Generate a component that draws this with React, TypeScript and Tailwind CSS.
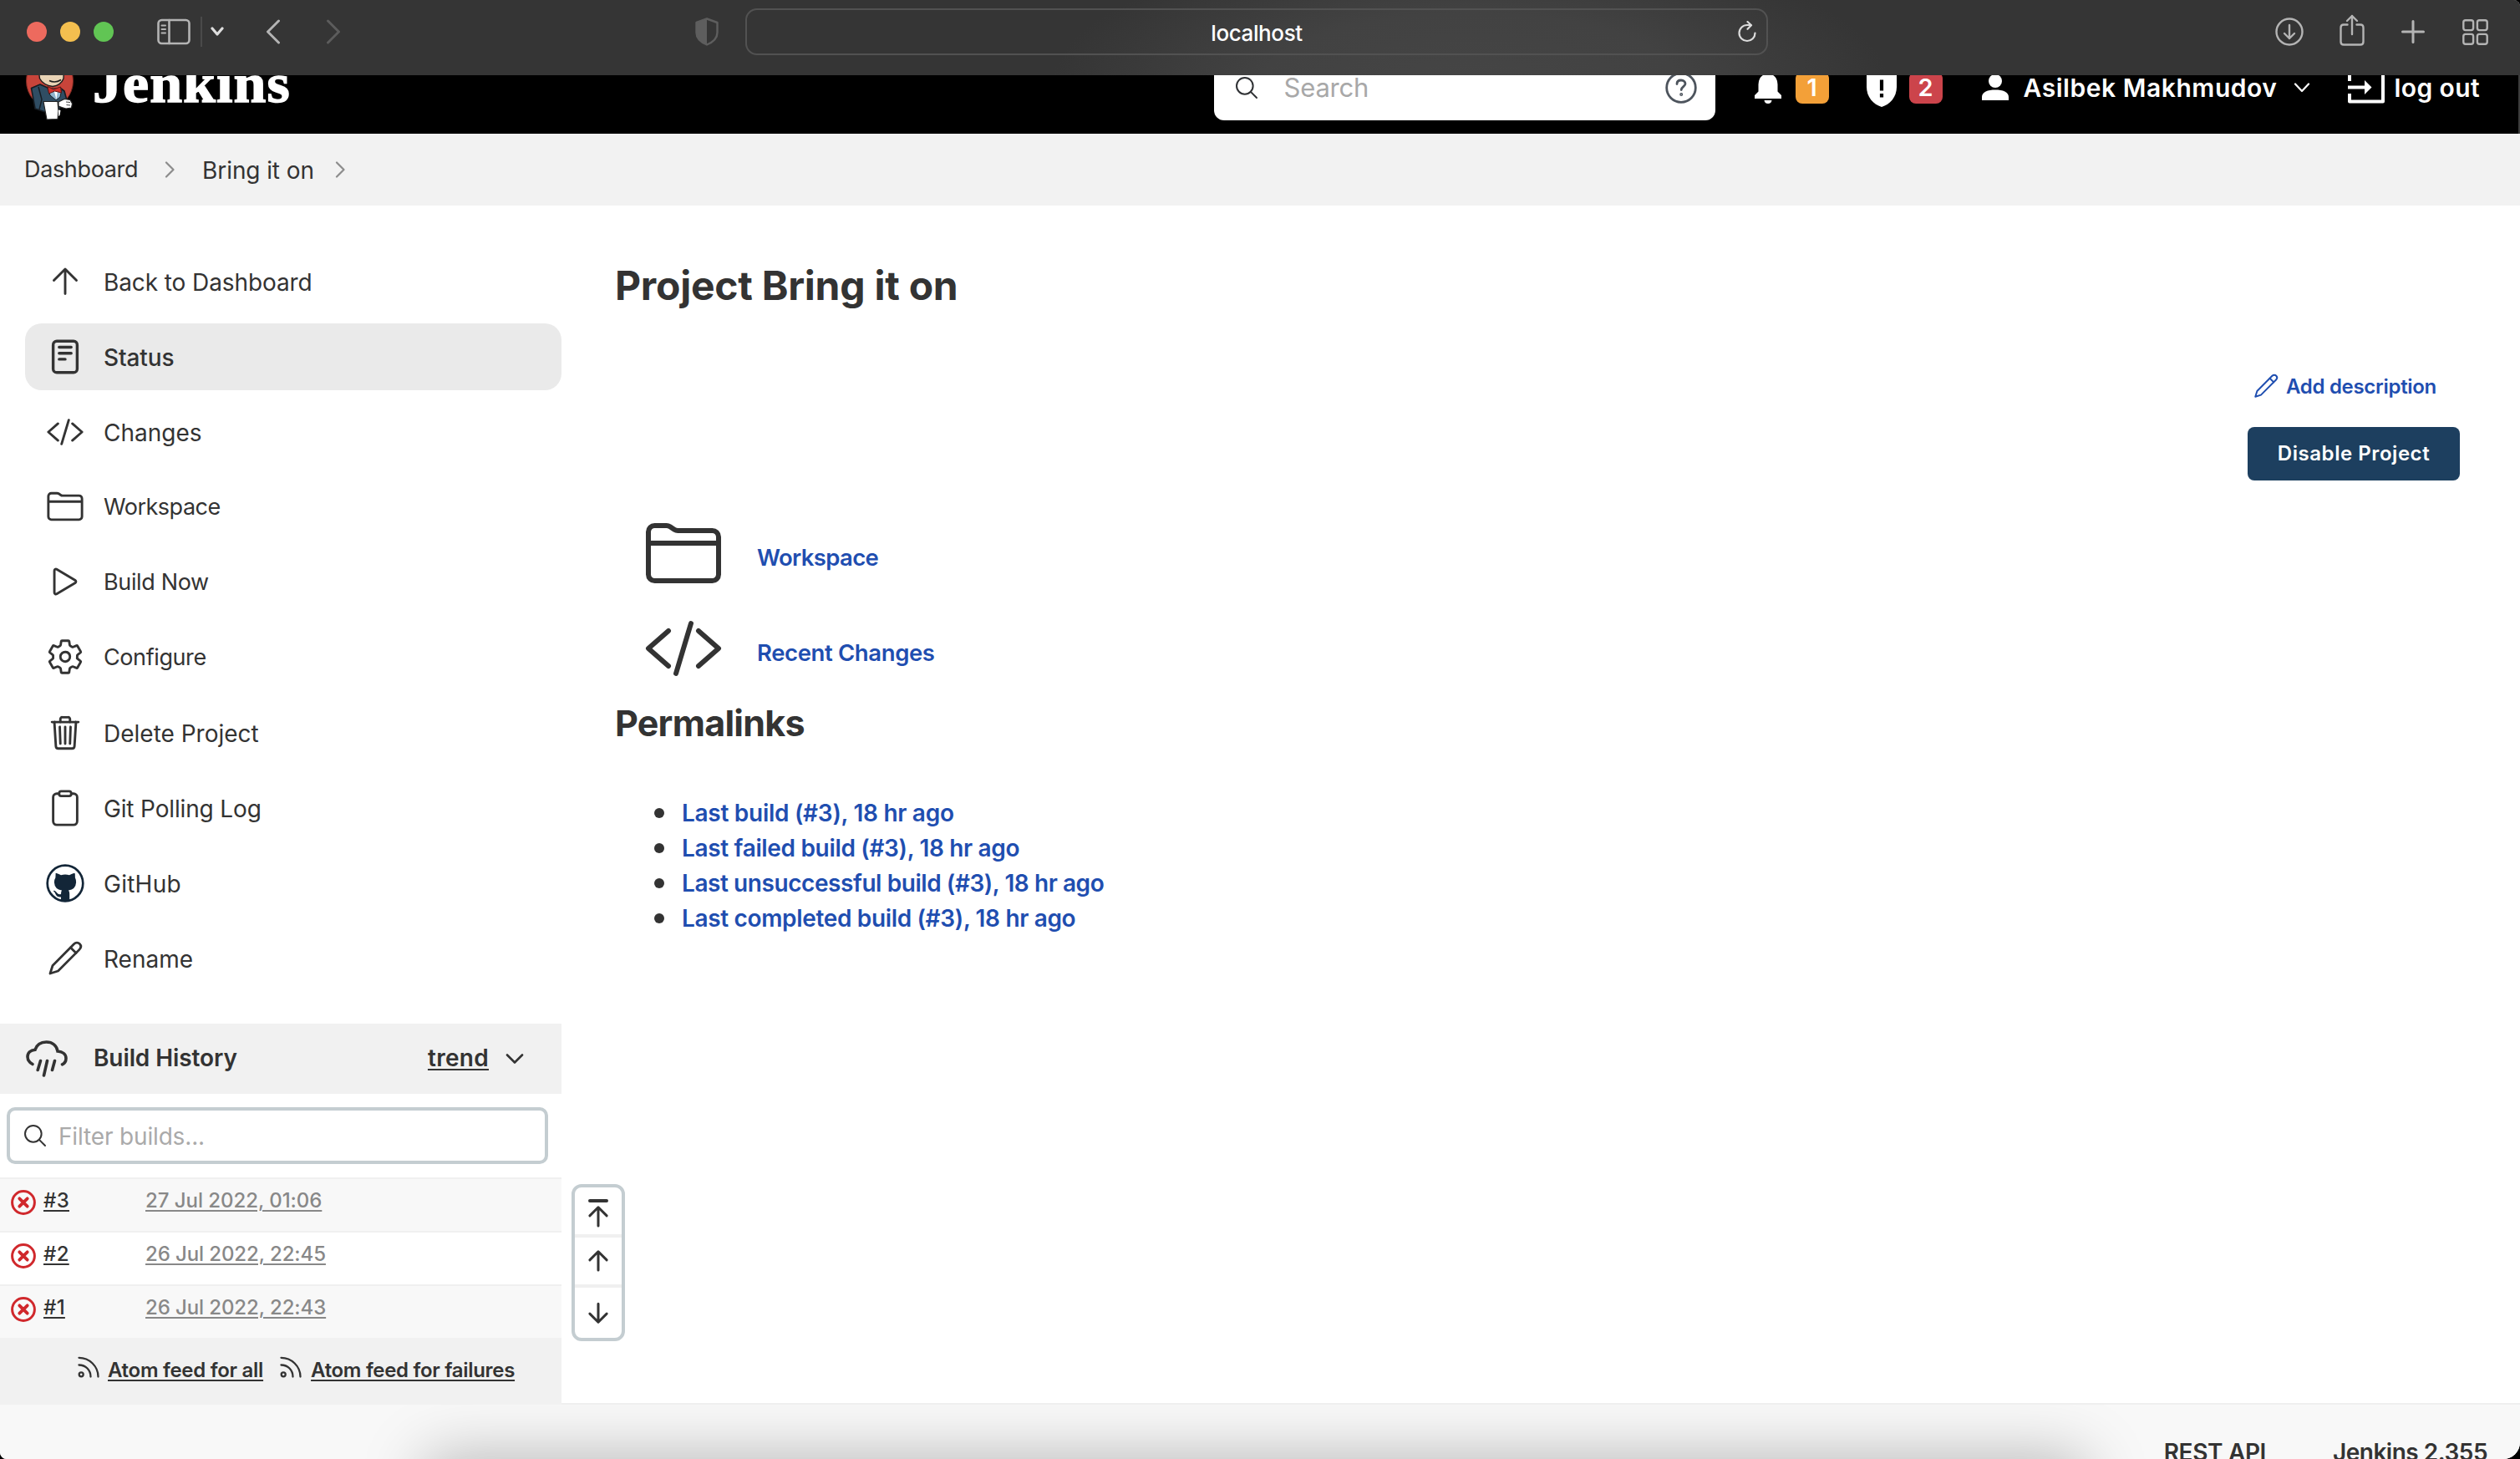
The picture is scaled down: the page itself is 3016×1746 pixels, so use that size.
import React from "react";
import {
  IoClipboardOutline,
  IoCodeSlashOutline,
  IoFolderOutline,
  IoPlayOutline,
  IoReaderOutline,
  IoSearchOutline,
  IoSettingsOutline,
  IoTrashOutline,
} from "react-icons/io5";

function ButlerLogo() {
  return (
    <svg viewBox="30 50 60 96" className="h-[96px] w-[60px]" strokeLinejoin="round">
      <ellipse cx="59.5" cy="97" rx="28" ry="31" fill="#c8443a" stroke="#7d2a22" strokeWidth="1" />
      <path d="M45 74H77L76 94Q73 102 63 103.5Q52 102 47.5 94Z" fill="#e9d3b5" stroke="#1d1d1d" strokeWidth="1.4" />
      <path d="M59 96.5Q66 100 73 95.5" fill="none" stroke="#1d1d1d" strokeWidth="1.6" />
      <path d="M37.5 105.5L48 101L57 105L65 108L73 106L77 109L80 120L74 124L70 133L54 134L42 130Z" fill="#2f4d63" stroke="#161c22" strokeWidth="1.6" />
      <path d="M57 106L74 106L72 116L67 120L60 114Z" fill="#8fb4cd" stroke="#161c22" strokeWidth="1" />
      <path d="M64.5 108L69 108L67.5 119Z" fill="#ffffff" />
      <path d="M57 103.5L64 107L72.5 104L73.5 111L65.5 109L58.5 112Z" fill="#d3302b" stroke="#5e1512" strokeWidth="1" />
      <path d="M46 104L50 119L47 131" fill="none" stroke="#161c22" strokeWidth="1.4" />
      <path d="M52 121.5L69 121.5L70 133L69 142.5L56 143Z" fill="#ffffff" stroke="#222" strokeWidth="1.2" />
      <path d="M70 122L77 118.5L84 119.5L86.5 124L85.5 129L79 130L74 128.5L70 127Z" fill="#ffffff" stroke="#222" strokeWidth="1.2" />
      <path d="M79 122L84 122.5M79.5 125.5L84 126" stroke="#444" strokeWidth="1" />
      <path d="M70 131.5L72.5 132L71.5 138L70 139Z" fill="#ffffff" />
    </svg>
  );
}

function ArrowIcon({ className, width }: { className: string; width: number }) {
  return (
    <svg viewBox="0 0 48 48" className={className} fill="none" stroke="currentColor" strokeWidth={width} strokeLinecap="round" strokeLinejoin="round">
      <path d="M10.5 22.5L24 9L37.5 22.5M24 10V38.5" />
    </svg>
  );
}

function PencilIcon({ className }: { className: string }) {
  return (
    <svg viewBox="0 0 48 48" className={className} fill="none" stroke="currentColor" strokeWidth="2.8" strokeLinecap="round" strokeLinejoin="round">
      <path d="M6 42L9 32.5L34.5 6.8C36.8 4.5 39.5 4.8 41.3 6.6C43.2 8.5 43.3 11 41 13.4L15.5 39Z" />
      <path d="M30.5 11L37 17.5" />
    </svg>
  );
}

function GithubIcon() {
  return (
    <svg viewBox="0 0 48 48" className="size-12">
      <circle cx="24" cy="24" r="21.3" fill="#fff" stroke="#132638" strokeWidth="2.7" />
      <path
        d="M12.6 13.2Q12 11.6 13.6 12Q16.5 12.7 19 14.2Q24 13 29 14.2Q31.5 12.7 34.4 12Q36 11.6 35.8 13.2L35.9 17.2Q37.3 20 37.1 23Q36.5 31.5 28 32.4Q29.2 33.8 29.2 36.5V45Q24 46.5 19 45V40.5Q14.2 41 12.5 37Q11.8 35 10 33.6Q9.4 32.7 11 32.7Q12.8 33.2 14.2 35.5Q15.8 38 19 37Q19 33.8 20 32.4Q11.5 31.5 10.9 23Q10.7 20 12.4 17.2Z"
        fill="#132638"
      />
    </svg>
  );
}

function RainCloudIcon() {
  return (
    <svg viewBox="0 0 50 44" className="h-[44px] w-[50px]" fill="none" stroke="currentColor" strokeWidth="3.6" strokeLinecap="round">
      <path d="M8 28.5C3.5 26 2 23 2 19.8C2 15 5.5 11.8 11 11.3C13 5 18 2 24.5 2C32 2 36.8 6.5 38 13C44 13.5 48 16.5 48 21.5C48 25 46.5 27.5 43.5 28.8" />
      <path d="M17.5 24.5L14.2 35.5M25.5 24.5L21.5 42M34.5 24.5L31.5 35.5" />
    </svg>
  );
}

function RssIcon() {
  return (
    <svg viewBox="0 0 26 26" className="size-[26px]" fill="none" stroke="currentColor" strokeWidth="2.3" strokeLinecap="round">
      <circle cx="4.2" cy="21.8" r="2.5" />
      <path d="M1.5 10.5C9.5 10.5 15.5 16.5 15.5 24.5M1.5 1.8C14 1.8 24.5 12 24.5 24.5" />
    </svg>
  );
}

function FailedIcon() {
  return (
    <svg viewBox="0 0 30 30" className="size-[30px]" fill="none" stroke="#d0282c" strokeLinecap="round">
      <circle cx="15" cy="15" r="13.4" strokeWidth="3" />
      <path d="M10.3 10.3L19.7 19.7M19.7 10.3L10.3 19.7" strokeWidth="3.8" />
    </svg>
  );
}

function Chevron({ className, d, box, width }: { className: string; d: string; box: string; width: number }) {
  return (
    <svg viewBox={box} className={className} fill="none" stroke="currentColor" strokeWidth={width} strokeLinecap="round" strokeLinejoin="round">
      <path d={d} />
    </svg>
  );
}

function BrowserBar() {
  return (
    <div className="flex h-[90px] shrink-0 items-center bg-[#353535] bg-[radial-gradient(ellipse_500px_170px_at_1760px_100px,#454545_0%,#424242_50%,#353535_100%)] pb-[14px] pl-8 text-[#b4b4b4]">
      <div className="flex gap-4">
        <span className="size-6 rounded-full bg-[#ed6a5e]" />
        <span className="size-6 rounded-full bg-[#f4bf4f]" />
        <span className="size-6 rounded-full bg-[#61c554]" />
      </div>
      <svg viewBox="0 0 40 32" className="ml-[52px] h-8 w-10" fill="none" stroke="currentColor" strokeWidth="2.6" strokeLinecap="round">
        <rect x="1.5" y="2" width="37" height="28" rx="4" />
        <path d="M14.5 2V30" />
        <path d="M5.5 8.5H10M5.5 13H10M5.5 17.5H10" strokeWidth="2" />
      </svg>
      <span className="ml-[12px] h-9 w-[2px] bg-[#4a4a4a]" />
      <Chevron className="ml-[10px] h-3 w-4 text-[#dedede]" box="0 0 16 12" d="M2 2L8 9L14 2" width={3.2} />
      <Chevron className="ml-[50px] h-[30px] w-[18px]" box="0 0 18 30" d="M15.5 2L2.5 15L15.5 28" width={3} />
      <Chevron className="ml-[54px] h-[30px] w-[18px] text-[#5c5c5c]" box="0 0 18 30" d="M2.5 2L15.5 15L2.5 28" width={3} />
      <svg viewBox="0 0 28 34" className="ml-[424px] h-[34px] w-7 text-[#5e5e5e]">
        <path d="M14 1.5L26.5 6V18C26.5 25 20 30 14 32.5C8 30 1.5 25 1.5 18V6Z" fill="none" stroke="currentColor" strokeWidth="2.4" strokeLinejoin="round" />
        <path d="M14 1.5V32.5C8 30 1.5 25 1.5 18V6Z" fill="currentColor" />
      </svg>
      <div className="ml-[32px] flex h-14 w-[1224px] items-center rounded-[14px] border-2 border-[#525252] px-3">
        <span className="flex-1" />
        <span className="pt-[3px] text-[26px] font-medium tracking-[-0.4px] text-white">localhost</span>
        <span className="flex flex-1 justify-end">
          <svg viewBox="0 0 22 26" className="h-[26px] w-[22px] text-[#dcdcdc]" fill="none" stroke="currentColor" strokeWidth="2.2" strokeLinecap="round" strokeLinejoin="round">
            <path d="M20.5 14.5A9.5 9.5 0 1 1 11 5H15.5" />
            <path d="M11.5 1L16 5.2L11.5 9.8" />
          </svg>
        </span>
      </div>
      <svg viewBox="0 0 34 34" className="ml-[607px] size-[34px]" fill="none" stroke="currentColor" strokeWidth="2.4" strokeLinecap="round" strokeLinejoin="round">
        <circle cx="17" cy="17" r="15.5" />
        <path d="M17 9V25M11 19L17 25L23 19" />
      </svg>
      <svg viewBox="0 0 30 38" className="-mt-1 ml-[43px] h-[38px] w-[30px]" fill="none" stroke="currentColor" strokeWidth="2.4" strokeLinecap="round" strokeLinejoin="round">
        <path d="M9.5 12.5H5Q1.5 12.5 1.5 16V33Q1.5 36.5 5 36.5H25Q28.5 36.5 28.5 33V16Q28.5 12.5 25 12.5H20.5" />
        <path d="M15 24V2M9 8L15 2L21 8" />
      </svg>
      <svg viewBox="0 0 28 28" className="ml-[44px] size-7" fill="none" stroke="currentColor" strokeWidth="3" strokeLinecap="round">
        <path d="M14 1.5V26.5M1.5 14H26.5" />
      </svg>
      <svg viewBox="0 0 31 31" className="ml-[45px] size-[31px]" fill="none" stroke="currentColor" strokeWidth="2.4">
        <rect x="1.3" y="1.3" width="11.8" height="11.8" rx="2.5" />
        <rect x="17.9" y="1.3" width="11.8" height="11.8" rx="2.5" />
        <rect x="1.3" y="17.9" width="11.8" height="11.8" rx="2.5" />
        <rect x="17.9" y="17.9" width="11.8" height="11.8" rx="2.5" />
      </svg>
    </div>
  );
}

function Header() {
  return (
    <header className="h-[70px] shrink-0 overflow-hidden border-r-2 border-[#3c3c3c] bg-black text-white">
      <div className="-mt-10 flex h-[110px] items-center">
        <div className="flex h-full items-start pl-[30px]">
          <ButlerLogo />
          <span className="ml-[21px] origin-left scale-x-[1.06] pt-[12px] font-['Liberation_Serif'] text-[66px] leading-[76px] font-bold tracking-[1px] [-webkit-text-stroke:1.4px_#fff]">Jenkins</span>
        </div>
        <div className="mr-[46px] ml-auto flex items-center">
          <div className="flex h-[78px] w-[600px] items-center rounded-xl bg-white pr-[22px] pl-[23px]">
            <IoSearchOutline className="size-[32px] text-[#2f3134]" />
            <span className="ml-[29px] text-[31px] tracking-[-0.2px] text-[#a8a8a8]">Search</span>
            <svg viewBox="0 0 38 38" className="ml-auto size-[38px] text-[#4d545d]" fill="none" stroke="currentColor" strokeWidth="2.8" strokeLinecap="round" strokeLinejoin="round">
              <circle cx="19" cy="19" r="17.3" />
              <path d="M14 14.5C14 11.5 16 10 19 10C22 10 24 11.8 24 14.3C24 17.5 19.3 17.8 19.2 21.5" />
              <circle cx="19.2" cy="27" r="0.7" strokeWidth="2.6" />
            </svg>
          </div>
          <svg viewBox="0 0 32 38" className="ml-[47px] h-[38px] w-8" fill="currentColor">
            <path d="M13 2.5Q16 -0.5 19 2.5Q27.5 5.5 27.5 15V23.5L32 28V32H0V28L4.5 23.5V15Q4.5 5.5 13 2.5Z" />
            <path d="M11.5 34H20.5Q20 38 16 38Q12 38 11.5 34Z" />
          </svg>
          <span className="ml-[17px] flex h-[38px] w-10 items-center justify-center rounded-lg bg-[#f3a038] text-[29px] font-semibold">1</span>
          <svg viewBox="0 0 38 46" className="ml-[44px] h-[46px] w-[38px]">
            <path d="M19 0L37 6V22C37 34 29 43 19 46C9 43 1 34 1 22V6Z" fill="#fff" />
            <path d="M19 13.5V26.5M19 30V34.5" stroke="#000" strokeWidth="4.2" />
          </svg>
          <span className="ml-[14px] flex h-[38px] w-10 items-center justify-center rounded-lg bg-[#cc444b] text-[29px] font-semibold">2</span>
          <svg viewBox="0 0 32 32" className="ml-[47px] size-8" fill="currentColor">
            <circle cx="16" cy="8" r="8" />
            <path d="M0 31V27C0 21 7 18.5 16 18.5C25 18.5 32 21 32 27V31Z" />
          </svg>
          <span className="ml-[18px] text-[30px] font-semibold tracking-[0.55px]">Asilbek Makhmudov</span>
          <Chevron className="ml-[19px] h-3 w-5" box="0 0 20 12" d="M2 1.5L10 10L18 1.5" width={2.2} />
          <svg viewBox="0 0 44 38" className="ml-[45px] h-[38px] w-11" fill="none" stroke="currentColor" strokeWidth="4">
            <path d="M2 11V2H42V35.5H2V26" strokeLinejoin="round" />
            <path d="M0 18.5H22" />
            <path d="M20 10L28.5 18.5L20 27Z" fill="currentColor" stroke="none" />
          </svg>
          <span className="ml-[12px] text-[30px] font-semibold tracking-[0.4px]">log out</span>
        </div>
      </div>
    </header>
  );
}

function Breadcrumbs() {
  return (
    <nav className="flex h-[86px] shrink-0 items-center bg-[#f2f2f2] pl-[29px] text-[28px] text-[#333]">
      <span className="pt-px text-[27px] tracking-[-0.35px]">Dashboard</span>
      <Chevron className="ml-[32px] h-5 w-3 text-[#8c8c8c]" box="0 0 12 20" d="M2 1.5L10.5 10L2 18.5" width={2.2} />
      <span className="ml-[33px] pt-[2px] tracking-[-0.1px]">Bring it on</span>
      <Chevron className="ml-[25px] h-5 w-3 text-[#8c8c8c]" box="0 0 12 20" d="M2 1.5L10.5 10L2 18.5" width={2.2} />
    </nav>
  );
}

type Task = { label: string; icon: React.ReactNode; row: string; text: string };

const tasks: Task[] = [
  { label: "Back to Dashboard", icon: <ArrowIcon className="size-12" width={2.9} />, row: "", text: "text-[28px] tracking-[-0.1px]" },
  { label: "Status", icon: <IoReaderOutline className="mx-px size-[46px] [&_*]:stroke-[38px]" />, row: "rounded-[20px] bg-[#eaeaea]", text: "text-[28px] font-medium tracking-[-0.1px]" },
  { label: "Changes", icon: <IoCodeSlashOutline className="mx-px size-[46px]" />, row: "", text: "text-[28px]" },
  { label: "Workspace", icon: <IoFolderOutline className="mx-px size-[46px]" />, row: "-mt-px", text: "text-[27px] tracking-[-0.5px]" },
  { label: "Build Now", icon: <IoPlayOutline className="mx-px size-[46px]" />, row: "", text: "text-[27px] tracking-[-0.35px]" },
  { label: "Configure", icon: <IoSettingsOutline className="mx-px size-[46px]" />, row: "", text: "text-[27px] tracking-[-0.4px]" },
  { label: "Delete Project", icon: <IoTrashOutline className="mx-px size-[46px]" />, row: "mt-px", text: "text-[28px]" },
  { label: "Git Polling Log", icon: <IoClipboardOutline className="mx-px size-[46px]" />, row: "", text: "text-[28px] tracking-[-0.15px]" },
  { label: "GitHub", icon: <GithubIcon />, row: "", text: "text-[28px] tracking-[0.25px]" },
  { label: "Rename", icon: <PencilIcon className="size-12" />, row: "", text: "text-[28px]" },
];

const builds = [
  { id: "#3", date: "27 Jul 2022, 01:06", track: "tracking-[-0.05px]" },
  { id: "#2", date: "26 Jul 2022, 22:45", track: "tracking-[-0.1px]" },
  { id: "#1", date: "26 Jul 2022, 22:43", track: "tracking-[-0.1px]" },
];

function BuildHistory() {
  return (
    <section className="mt-[38px]">
      <div className="flex h-[84px] items-center bg-[#f1f1f1] pr-[45px] pl-[31px] text-[28px] font-semibold">
        <RainCloudIcon />
        <span className="ml-[31px] pb-[3px] tracking-[-0.1px]">Build History</span>
        <span className="ml-auto pb-[3px] tracking-[0.3px] underline decoration-2 underline-offset-[3px]">trend</span>
        <Chevron className="ml-[20px] h-3 w-[22px]" box="0 0 22 12" d="M2 1.5L11 10.5L20 1.5" width={2.6} />
      </div>
      <div className="mt-4 ml-2 flex h-[68px] w-[648px] items-center rounded-[10px] border-4 border-[#c4cdd1] pl-[14px]">
        <IoSearchOutline className="size-[32px]" />
        <span className="ml-[12px] pt-[2px] text-[28px] tracking-[-0.16px] text-[#aaa]">Filter builds...</span>
      </div>
      <div className="mt-4">
        {builds.map((b) => (
          <div key={b.id} className="flex h-16 items-start border-t-2 border-[#f0f0f0] pl-[13px] text-2xl leading-[50px] odd:bg-[#f8f8f8]">
            <span className="mt-[13px]">
              <FailedIcon />
            </span>
            <span className="ml-[9px] w-[122px] pt-px">
              <a className="font-medium tracking-[0.3px] underline decoration-2 underline-offset-[3px]">{b.id}</a>
            </span>
            <a className={`pt-px font-medium text-[#888] underline decoration-2 underline-offset-[3px] ${b.track}`}>{b.date}</a>
          </div>
        ))}
      </div>
      <div className="flex h-20 items-center bg-[#f1f1f1] pb-[3px] pl-[93px] text-2xl font-semibold">
        <span className="mb-[7px]">
          <RssIcon />
        </span>
        <a className="ml-[10px] tracking-[-0.28px] underline decoration-2 underline-offset-[3px]">Atom feed for all</a>
        <span className="mb-[7px] ml-[20px]">
          <RssIcon />
        </span>
        <a className="ml-[11px] tracking-[-0.31px] underline decoration-2 underline-offset-[3px]">Atom feed for failures</a>
      </div>
    </section>
  );
}

function Sidebar() {
  return (
    <aside className="w-[672px] shrink-0 pt-[51px]">
      <ul className="flex flex-col gap-[10px] pl-[30px]">
        {tasks.map((t) => (
          <li key={t.label} className={`flex h-20 items-center pl-[24px] ${t.row}`}>
            {t.icon}
            <span className={`ml-[22px] pt-[2px] ${t.text}`}>{t.label}</span>
          </li>
        ))}
      </ul>
      <BuildHistory />
    </aside>
  );
}

function PagerControls() {
  return (
    <div className="absolute top-[1171px] left-[12px] flex h-[188px] w-16 flex-col rounded-xl border-4 border-[#c4cdd1] bg-white">
      <span className="flex h-[56px] flex-col items-center pt-[14px]">
        <span className="h-1 w-6 rounded-full bg-[#333]" />
        <ArrowIcon className="-mt-px size-9" width={4} />
      </span>
      <span className="flex h-[60px] items-center justify-center border-t-4 border-[#f0f0f0]">
        <ArrowIcon className="size-9" width={4} />
      </span>
      <span className="flex h-[64px] items-center justify-center border-t-4 border-[#f0f0f0]">
        <ArrowIcon className="size-9 rotate-180" width={4} />
      </span>
    </div>
  );
}

const permalinks = [
  { label: "Last build (#3), 18 hr ago", track: "tracking-[-0.28px]" },
  { label: "Last failed build (#3), 18 hr ago", track: "tracking-[-0.33px]" },
  { label: "Last unsuccessful build (#3), 18 hr ago", track: "tracking-[-0.43px]" },
  { label: "Last completed build (#3), 18 hr ago", track: "tracking-[-0.34px]" },
];

function Main() {
  return (
    <main className="relative flex-1 border-b-2 border-[#efefef] pt-16 pr-[72px] pl-[64px]">
      <h1 className="flex h-16 items-center text-[48px] font-bold">
        <span className="tracking-[-0.25px]">Project Bring it on</span>
      </h1>
      <div className="mt-[68px] flex flex-col items-end">
        <a className="mr-[28px] flex h-10 items-center text-2xl font-semibold text-[#1f4eb0]">
          <PencilIcon className="size-[34px]" />
          <span className="ml-[7px] pt-[2px] tracking-[-0.3px]">Add description</span>
        </a>
        <button className="mt-[29px] flex h-16 w-[254px] items-center justify-center rounded-lg bg-[#1d3f5f] pb-px text-2xl font-semibold text-white">
          <span className="tracking-[0.55px]">Disable Project</span>
        </button>
      </div>
      <div className="mt-[37px] flex h-[100px] items-center pl-[34px] font-semibold text-[#1f4eb0]">
        <IoFolderOutline className="size-[96px] text-[#333]" />
        <span className="ml-[40px] pt-[11px] text-[27.5px] tracking-[-0.65px]">Workspace</span>
      </div>
      <div className="mt-[14px] flex h-[100px] items-center pl-[34px] font-semibold text-[#1f4eb0]">
        <IoCodeSlashOutline className="size-[96px] text-[#333]" />
        <span className="ml-[40px] pt-[11px] text-[27.5px] tracking-[-0.38px]">Recent Changes</span>
      </div>
      <h2 className="mt-[7px] flex h-16 items-center text-[43px] font-bold">
        <span className="tracking-[-0.75px]">Permalinks</span>
      </h2>
      <ul className="mt-[55px] pl-[47px] text-[28px] leading-[42px] font-[570] text-[#1f4eb0]">
        {permalinks.map((p) => (
          <li key={p.label} className="flex items-center">
            <span className="mr-[21px] size-3 rounded-full bg-[#333]" />
            <a className={p.track}>{p.label}</a>
          </li>
        ))}
      </ul>
      <PagerControls />
    </main>
  );
}

export default function App() {
  return (
    <div className="h-[1746px] w-[3016px] bg-black">
      <div className="flex h-full w-full flex-col overflow-hidden rounded-tr-[8px] rounded-br-[20px] rounded-bl-[8px] bg-white font-['Inter','Liberation_Sans',sans-serif] text-[#333]">
        <BrowserBar />
        <Header />
        <Breadcrumbs />
        <div className="flex h-[1435px] shrink-0">
          <Sidebar />
          <Main />
        </div>
        <footer className="relative h-[65px] shrink-0 overflow-hidden bg-[#f8f8f8] text-[28px] font-semibold">
          <div className="absolute top-[74px] left-[520px] h-20 w-[1965px] shadow-[0_0_76px_10px_rgba(0,0,0,0.28)]" />
          <div className="flex justify-end pt-[40px] pr-[39px] leading-[34px]">
            <span className="mr-[80px] tracking-[-0.35px]">REST API</span>
            <span className="tracking-[-0.5px]">Jenkins 2.355</span>
          </div>
        </footer>
      </div>
    </div>
  );
}
